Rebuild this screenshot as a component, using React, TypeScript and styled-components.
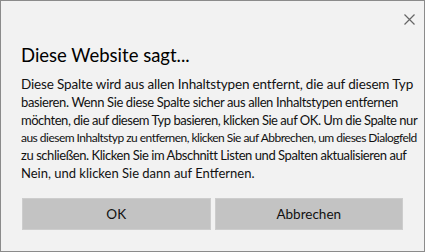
import React from "react";
import styled, { createGlobalStyle } from "styled-components";

const Global = createGlobalStyle`
  html, body { margin: 0; padding: 0; background: #f2f2f2; }
  * { box-sizing: border-box; }
`;

const Window = styled.div`
  width: 425px;
  height: 252px;
  background: #f2f2f2;
  border: 1px solid #8b8b8b;
  display: flex;
  flex-direction: column;
  padding: 0 20px;
  font-family: Lato, "Liberation Sans", sans-serif;
  color: #111;
`;

const Header = styled.div`
  height: 42px;
  display: flex;
  justify-content: flex-end;
  align-items: center;
  padding-bottom: 6px;
`;

const Close = styled.button`
  width: 20px;
  height: 20px;
  margin-right: -15px;
  border: none;
  background: transparent;
  padding: 0;
  display: flex;
  align-items: center;
  justify-content: center;
  cursor: pointer;
`;

const Title = styled.h1`
  margin: 0;
  font-size: 18.5px;
  font-weight: 400;
  line-height: 24px;
  color: #000;
`;

const Body = styled.div`
  margin-top: 9px;
  display: flex;
  flex-direction: column;
`;

const Line = styled.span<{ $size?: number; $h?: number; $ls?: number }>`
  display: block;
  white-space: nowrap;
  font-size: ${(p) => p.$size ?? 13}px;
  line-height: ${(p) => p.$h ?? 17.8}px;
  letter-spacing: ${(p) => p.$ls ?? 0}px;
  color: #111;
`;

const Buttons = styled.div`
  margin-top: auto;
  margin-bottom: 21px;
  display: grid;
  grid-template-columns: 1fr 1fr;
  gap: 4px;
  margin-left: 1px;
  margin-right: 1px;
`;

const Button = styled.button`
  height: 32px;
  background: #c3c3c3;
  border: 1px solid #cdcdcd;
  font-family: Lato, "Liberation Sans", sans-serif;
  font-size: 13.5px;
  color: #111;
  padding: 0;
`;

export default function App() {
  return (
    <>
      <Global />
      <Window>
        <Header>
          <Close aria-label="Schließen">
            <svg width="11" height="11" viewBox="0 0 11 11">
              <path d="M0.5 0.5 L10.5 10.5 M10.5 0.5 L0.5 10.5" stroke="#666" strokeWidth="1.2" />
            </svg>
          </Close>
        </Header>
        <Title>Diese Website sagt...</Title>
        <Body>
          <Line $size={13.5} $ls={-0.15}>Diese Spalte wird aus allen Inhaltstypen entfernt, die auf diesem Typ</Line>
          <Line $ls={-0.37}>basieren. Wenn Sie diese Spalte sicher aus allen Inhaltstypen entfernen</Line>
          <Line $ls={-0.47}>möchten, die auf diesem Typ basieren, klicken Sie auf OK. Um die Spalte nur</Line>
          <Line $size={12} $ls={-0.52}>aus diesem Inhaltstyp zu entfernen, klicken Sie auf Abbrechen, um dieses Dialogfeld</Line>
          <Line $ls={-0.44}>zu schließen. Klicken Sie im Abschnitt Listen und Spalten aktualisieren auf</Line>
          <Line>Nein, und klicken Sie dann auf Entfernen.</Line>
        </Body>
        <Buttons>
          <Button>OK</Button>
          <Button>Abbrechen</Button>
        </Buttons>
      </Window>
    </>
  );
}
